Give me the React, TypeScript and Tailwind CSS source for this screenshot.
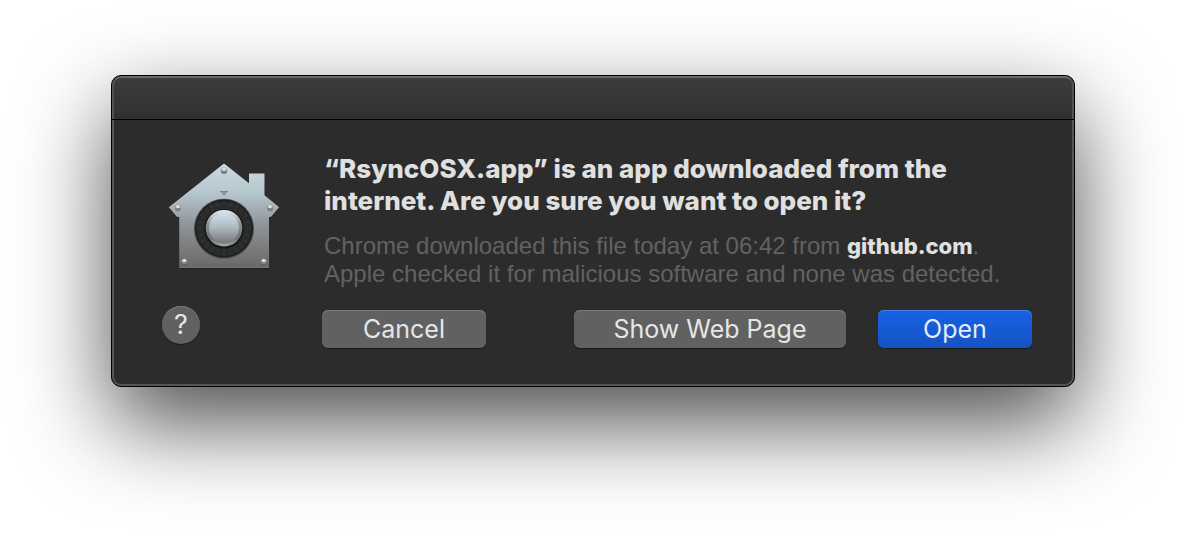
import React from "react";

const ticks = Array.from({ length: 24 }, (_, i) => i * 15);
const screws = [
  { x: 69, y: 20.5, r: 3.2 },
  { x: 23, y: 57.8, r: 3 },
  { x: 115, y: 57.8, r: 3 },
  { x: 29.3, y: 111.8, r: 3 },
  { x: 108.7, y: 111.8, r: 3 },
];

function GatekeeperIcon() {
  return (
    <svg width="120" height="112" viewBox="9 10 120 112" role="img" aria-label="Gatekeeper">
      <defs>
        <linearGradient id="house" x1="0" y1="0" x2="0" y2="1">
          <stop offset="0" stopColor="#c9dbe3" />
          <stop offset="0.3" stopColor="#b4c4cb" />
          <stop offset="0.6" stopColor="#8d9397" />
          <stop offset="1" stopColor="#6a6866" />
        </linearGradient>
        <linearGradient id="rim" x1="0" y1="0" x2="0" y2="1">
          <stop offset="0" stopColor="#e6eff3" />
          <stop offset="0.4" stopColor="#7e858a" />
          <stop offset="0.8" stopColor="#62676b" />
          <stop offset="1" stopColor="#a3a5a7" />
        </linearGradient>
        <linearGradient id="knob" x1="0" y1="0" x2="0" y2="1">
          <stop offset="0" stopColor="#cfe2ea" />
          <stop offset="0.45" stopColor="#aebbc2" />
          <stop offset="1" stopColor="#77797b" />
        </linearGradient>
        <radialGradient id="screw" cx="0.5" cy="0.35" r="0.65">
          <stop offset="0" stopColor="#ffffff" />
          <stop offset="0.45" stopColor="#c4c8ca" />
          <stop offset="1" stopColor="#3f4346" />
        </radialGradient>
      </defs>
      <path
        d="M69 13.5 94 33.2V23.5H109.5V45.2L124.2 57.2 116 67H114V118H24.2V67H22L13.8 57.2Z"
        fill="#000"
        opacity="0.3"
        transform="translate(0 1)"
      />
      <path
        d="M69 13.5 94 33.2V23.5H109.5V45.2L124.2 57.2 116 67H114V118H24.2V67H22L13.8 57.2Z"
        fill="url(#house)"
      />
      <path d="M24.2 117.5H114" stroke="#7a7977" strokeWidth="0.8" />
      <path d="M65 41.5H73L69 46Z" fill="#8d9aa0" />
      <path d="M65 41.5H73" stroke="#737f85" strokeWidth="0.8" />
      <circle cx="69" cy="78.7" r="30" fill="#484b4d" />
      <circle cx="69" cy="78.5" r="29" fill="#1d1f1f" />
      <circle cx="69" cy="78.5" r="23.5" fill="none" stroke="#292b2b" strokeWidth="8" />
      <g stroke="#3c3f40" strokeWidth="0.8">
        {ticks.map((a) => (
          <path key={a} d="M69 51.5V56.5" transform={`rotate(${a} 69 78.5)`} />
        ))}
      </g>
      <circle cx="69" cy="79" r="19.6" fill="#151616" />
      <circle cx="69" cy="78.2" r="18.3" fill="url(#rim)" />
      <circle cx="69" cy="78.2" r="16.6" fill="none" stroke="#fff" strokeOpacity="0.18" strokeWidth="3" strokeDasharray="1 1.2" />
      <circle cx="69" cy="78.2" r="15" fill="url(#knob)" />
      {screws.map((s) => (
        <g key={`${s.x}-${s.y}`}>
          <circle cx={s.x} cy={s.y} r={s.r} fill="url(#screw)" />
          <path d={`M${s.x - 1.8} ${s.y + 0.6}h3.6`} stroke="#606568" strokeWidth="0.8" />
        </g>
      ))}
    </svg>
  );
}

const grayButton =
  "h-[38px] rounded-md bg-[#616161] text-[#e6e6e6] shadow-[inset_0_1px_0_#7b7b7b,0_1px_1px_rgba(0,0,0,0.4)]";

export default function App() {
  return (
    <main className="min-h-screen overflow-hidden bg-white px-[111px] py-[75px] font-['Inter','Liberation_Sans',sans-serif]">
      <section
        role="dialog"
        aria-labelledby="dialog-title"
        aria-describedby="dialog-text"
        className="overflow-hidden rounded-[10px] border border-black bg-[#2c2c2c] shadow-[0_36px_90px_rgba(0,0,0,0.7)]"
      >
        <header className="h-[43px] rounded-t-[9px] border-x-2 border-t-2 border-x-[#535353] border-t-[#6a6a6a] bg-linear-to-b from-[#3c3c3c] to-[#303030]" />
        <div className="h-px bg-black" />
        <div className="rounded-b-[9px] border-x-2 border-b-2 border-[#555555] pt-[33px] pr-10 pb-9 pl-12">
          <div className="flex">
            <div className="w-[162px] shrink-0 pt-[7px] pl-0.5">
              <GatekeeperIcon />
            </div>
            <div className="min-w-0">
              <h1 id="dialog-title" className="text-[26px] leading-8 font-extrabold text-[#e0e0e0]">
                “RsyncOSX.app” is an app downloaded from the
                <br />
                internet. Are you sure you want to open it?
              </h1>
              <p
                id="dialog-text"
                className="pt-[15px] font-['Liberation_Sans',sans-serif] text-2xl leading-7 text-[#626262]"
              >
                Chrome downloaded this file today at 06:42 from{" "}
                <strong className="font-['Inter',sans-serif] text-[22px] font-extrabold text-[#e0e0e0]">github.com</strong>.
                <br />
                Apple checked it for malicious software and none was detected.
              </p>
            </div>
          </div>
          <div className="flex items-start pt-[18px] text-[25px] leading-[38px]">
            <button
              type="button"
              aria-label="Help"
              className="size-[38px] rounded-full bg-[#616161] text-[27px] text-[#e6e6e6] shadow-[inset_0_1px_0_#7b7b7b,0_1px_1px_rgba(0,0,0,0.4)]"
            >
              ?
            </button>
            <div className="flex grow pt-1 pl-[122px]">
              <button type="button" className={`${grayButton} w-[164px]`}>
                Cancel
              </button>
              <button type="button" className={`${grayButton} mr-8 ml-auto w-[272px]`}>
                Show Web Page
              </button>
              <button
                type="button"
                className="h-[38px] w-[154px] rounded-md bg-linear-to-b from-[#1862e6] to-[#1453c4] text-[#e3eafa] shadow-[inset_0_1px_0_#4484ec,0_1px_1px_rgba(0,0,0,0.4)]"
              >
                Open
              </button>
            </div>
          </div>
        </div>
      </section>
    </main>
  );
}
